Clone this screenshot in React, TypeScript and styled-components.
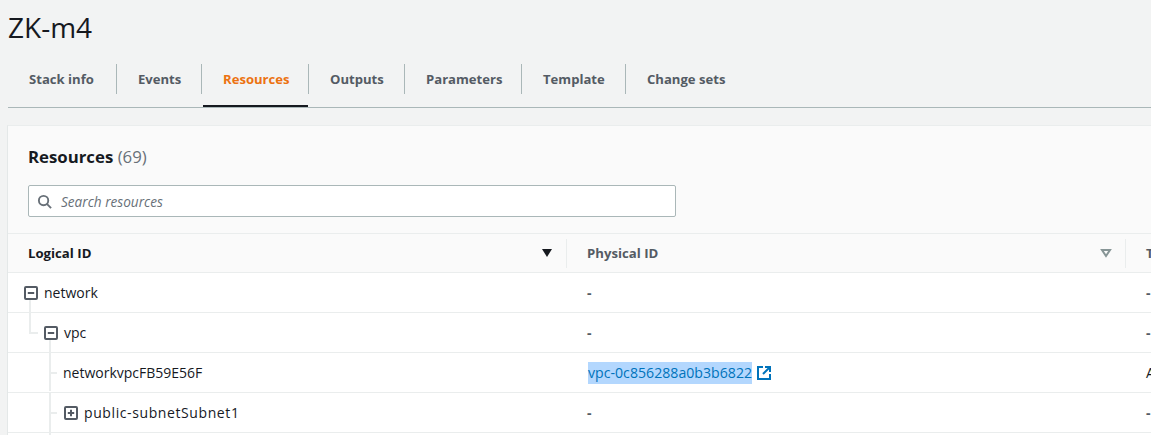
import React from "react";
import styled, { createGlobalStyle } from "styled-components";

const Global = createGlobalStyle`
  html, body { margin: 0; padding: 0; background: #f2f3f3; overflow: hidden; }
  body { width: 1151px; height: 435px; font-family: "Open Sans", "Noto Sans", sans-serif; color: #16191f; }
`;

const Page = styled.div`
  width: 1151px;
  height: 435px;
  overflow: hidden;
  padding-left: 8px;
  box-sizing: border-box;
`;

const Title = styled.h1`
  margin: 0;
  height: 64px;
  padding-top: 9px;
  box-sizing: border-box;
  font-size: 28px;
  line-height: 36px;
  font-weight: 400;
  color: #16191f;
`;

const TabBar = styled.div`
  display: flex;
  align-items: flex-start;
  height: 44px;
  box-sizing: border-box;
  border-bottom: 1px solid #aab7b8;
  margin-right: -8px;
`;

const Tab = styled.div<{ $active?: boolean; $last?: boolean; $width: number }>`
  position: relative;
  width: ${(p) => p.$width}px;
  height: 30px;
  box-sizing: border-box;
  padding-left: 21px;
  font-size: 13.1px;
  line-height: 30px;
  font-weight: 700;
  white-space: nowrap;
  color: ${(p) => (p.$active ? "#ec7211" : "#545b64")};
  border-right: ${(p) => (p.$last ? "none" : "1px solid #aab7b8")};
  &::after {
    content: ${(p) => (p.$active ? '""' : "none")};
    position: absolute;
    left: 1px;
    right: 0;
    top: 41px;
    height: 2px;
    background: #16191f;
  }
`;

const Card = styled.section`
  margin-top: 17px;
  margin-left: -1px;
  width: 1300px;
  background: #fff;
  border-top: 1px solid #eaeded;
  border-left: 1px solid #e4e8e8;
`;

const CardHeader = styled.div`
  background: #fafafa;
  padding: 19px 0 16px 20px;
  border-bottom: 1px solid #eaeded;
`;

const Heading = styled.h2`
  margin: 0 0 16px;
  font-size: 16.8px;
  line-height: 24px;
  height: 24px;
  font-weight: 700;
  color: #16191f;
`;

const Count = styled.span`
  font-weight: 400;
  color: #687078;
`;

const Search = styled.div`
  display: flex;
  align-items: center;
  gap: 9px;
  width: 648px;
  height: 32px;
  box-sizing: border-box;
  padding-left: 8px;
  background: #fff;
  border: 1px solid #aab7b8;
  border-radius: 2px;
  font-size: 13.6px;
  font-style: italic;
  color: #687078;
`;

const HeadRow = styled.div`
  display: grid;
  grid-template-columns: 559px 559px 1fr;
  height: 38px;
  background: #fafafa;
  border-bottom: 1px solid #eaeded;
`;

const HeadCell = styled.div<{ $sorted?: boolean; $last?: boolean; $inset: number }>`
  position: relative;
  display: flex;
  align-items: center;
  justify-content: space-between;
  box-sizing: border-box;
  padding: 0 14px 0 ${(p) => p.$inset}px;
  font-size: 13.2px;
  font-weight: 700;
  color: ${(p) => (p.$sorted ? "#16191f" : "#545b64")};
  &::after {
    content: ${(p) => (p.$last ? "none" : '""')};
    position: absolute;
    right: 0;
    top: 5px;
    bottom: 4px;
    width: 1px;
    background: #eaeded;
  }
`;

const Row = styled.div`
  display: grid;
  grid-template-columns: 559px 559px 1fr;
  height: 40px;
  border-bottom: 1px solid #eaeded;
  box-sizing: border-box;
  align-items: center;
  font-size: 14px;
  color: #16191f;
`;

const TreeCell = styled.div<{ $indent: number }>`
  position: relative;
  height: 100%;
  display: flex;
  align-items: center;
  gap: 6px;
  box-sizing: border-box;
  padding-left: ${(p) => p.$indent}px;
`;

const TreeLine = styled.span<{ $x: number; $top: number; $w: number; $h: number }>`
  position: absolute;
  left: ${(p) => p.$x}px;
  top: ${(p) => p.$top}px;
  width: ${(p) => p.$w}px;
  height: ${(p) => p.$h}px;
  background: #eaeded;
`;

const WideLabel = styled.span`
  letter-spacing: 0.6px;
`;

const PlainCell = styled.div`
  padding-left: 20px;
  display: flex;
  align-items: center;
  gap: 5px;
  white-space: nowrap;
`;

const Dash = styled.span`
  color: #545b64;
  font-weight: 700;
`;

const LinkText = styled.span`
  margin-left: 1px;
  color: #0073bb;
  background: #b3d7fe;
  line-height: 22px;
  font-size: 14.15px;
`;

const ToggleBox = styled.svg`
  flex: none;
  display: block;
`;

function Toggle({ plus }: { plus?: boolean }) {
  return (
    <ToggleBox width="14" height="14" viewBox="0 0 14 14" fill="none">
      <rect x="1" y="1" width="12" height="12" rx="1" stroke="#545b64" strokeWidth="2" />
      <path d="M3.8 7h6.4" stroke="#545b64" strokeWidth="2" />
      {plus && <path d="M7 3.8v6.4" stroke="#545b64" strokeWidth="2" />}
    </ToggleBox>
  );
}

function SearchIcon() {
  return (
    <svg width="15" height="15" viewBox="0 0 16 16" fill="none">
      <circle cx="7" cy="7" r="5" stroke="#687078" strokeWidth="2" />
      <path d="M10.5 10.5L15 15" stroke="#687078" strokeWidth="2" />
    </svg>
  );
}

function SortIcon({ sorted }: { sorted?: boolean }) {
  return (
    <svg width="12" height="10" viewBox="0 0 12 10">
      {sorted ? (
        <path d="M1 1h10L6 9z" fill="#16191f" />
      ) : (
        <path d="M2 2h8L6 8z" fill="none" stroke="#879596" strokeWidth="2" />
      )}
    </svg>
  );
}

function ExternalIcon() {
  return (
    <svg width="14" height="14" viewBox="0 0 14 14" fill="none" stroke="#0073bb" strokeWidth="2">
      <path d="M6 1H1v12h12V8" />
      <path d="M8 1h5v5" />
      <path d="M13 1L6 8" />
    </svg>
  );
}

const tabs = [
  { label: "Stack info", width: 109 },
  { label: "Events", width: 85 },
  { label: "Resources", width: 107, active: true },
  { label: "Outputs", width: 96 },
  { label: "Parameters", width: 117 },
  { label: "Template", width: 104 },
  { label: "Change sets", width: 120, last: true },
];

export default function App() {
  return (
    <Page>
      <Global />
      <Title>ZK-m4</Title>
      <TabBar>
        {tabs.map((t) => (
          <Tab key={t.label} $width={t.width} $active={t.active} $last={t.last}>
            {t.label}
          </Tab>
        ))}
      </TabBar>
      <Card>
        <CardHeader>
          <Heading>
            Resources <Count>(69)</Count>
          </Heading>
          <Search>
            <SearchIcon />
            Search resources
          </Search>
        </CardHeader>
        <HeadRow>
          <HeadCell $sorted $inset={20}>
            Logical ID
            <SortIcon sorted />
          </HeadCell>
          <HeadCell $inset={20}>
            Physical ID
            <SortIcon />
          </HeadCell>
          <HeadCell $last $inset={20}>Type</HeadCell>
        </HeadRow>
        <Row>
          <TreeCell $indent={16}>
            <TreeLine $x={21} $top={27} $w={2} $h={13} />
            <Toggle />
            network
          </TreeCell>
          <PlainCell><Dash>-</Dash></PlainCell>
          <PlainCell><Dash>-</Dash></PlainCell>
        </Row>
        <Row>
          <TreeCell $indent={36}>
            <TreeLine $x={21} $top={0} $w={2} $h={21} />
            <TreeLine $x={21} $top={19} $w={9} $h={2} />
            <TreeLine $x={41} $top={27} $w={2} $h={13} />
            <Toggle />
            vpc
          </TreeCell>
          <PlainCell><Dash>-</Dash></PlainCell>
          <PlainCell><Dash>-</Dash></PlainCell>
        </Row>
        <Row>
          <TreeCell $indent={55}>
            <TreeLine $x={41} $top={0} $w={2} $h={38} />
            <TreeLine $x={42} $top={19} $w={7} $h={2} />
            networkvpcFB59E56F
          </TreeCell>
          <PlainCell>
            <LinkText>vpc-0c856288a0b3b6822</LinkText>
            <ExternalIcon />
          </PlainCell>
          <PlainCell>AWS::EC2::VPC</PlainCell>
        </Row>
        <Row>
          <TreeCell $indent={56}>
            <TreeLine $x={41} $top={0} $w={2} $h={40} />
            <TreeLine $x={42} $top={19} $w={7} $h={2} />
            <Toggle plus />
            <WideLabel>public-subnetSubnet1</WideLabel>
          </TreeCell>
          <PlainCell><Dash>-</Dash></PlainCell>
          <PlainCell><Dash>-</Dash></PlainCell>
        </Row>
        <Row>
          <TreeCell $indent={56}>
            <TreeLine $x={41} $top={0} $w={2} $h={40} />
          </TreeCell>
        </Row>
      </Card>
    </Page>
  );
}
